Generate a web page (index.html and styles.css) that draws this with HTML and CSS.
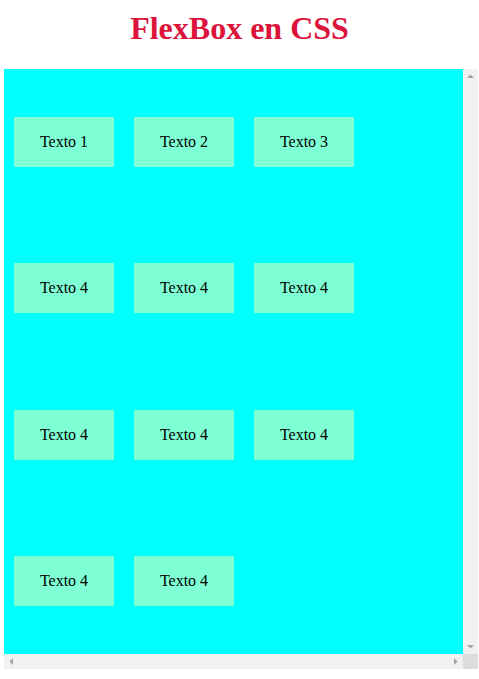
FILE: index.html
```html
<!DOCTYPE html>
<html lang="es">
<head>
<meta charset="utf-8">
<title>FlexBox en CSS</title>
<link rel="stylesheet" href="styles.css">
</head>
<body>
<h1 class="title">FlexBox en CSS</h1>
<div class="frame">
  <div class="container">
    <div class="item">Texto 1</div>
    <div class="item">Texto 2</div>
    <div class="item">Texto 3</div>
    <div class="item">Texto 4</div>
    <div class="item">Texto 4</div>
    <div class="item">Texto 4</div>
    <div class="item">Texto 4</div>
    <div class="item">Texto 4</div>
    <div class="item">Texto 4</div>
    <div class="item">Texto 4</div>
    <div class="item">Texto 4</div>
  </div>
  <div class="vbar">
    <svg class="btn" width="15" height="15" viewBox="0 0 15 15"><polygon points="4,9 11,9 7.5,5.5" fill="#a3a3a3"/></svg>
    <svg class="btn" width="15" height="15" viewBox="0 0 15 15"><polygon points="4,6 11,6 7.5,9.5" fill="#a3a3a3"/></svg>
  </div>
  <div class="hbar">
    <svg class="btn" width="15" height="15" viewBox="0 0 15 15"><polygon points="9,4 9,11 5.5,7.5" fill="#a3a3a3"/></svg>
    <svg class="btn" width="15" height="15" viewBox="0 0 15 15"><polygon points="6,4 6,11 9.5,7.5" fill="#a3a3a3"/></svg>
  </div>
  <div class="corner"></div>
</div>
</body>
</html>
```
FILE: styles.css
```css
html, body {
  margin: 0;
  padding: 0;
  background: #ffffff;
  font-family: "Liberation Serif", "Times New Roman", serif;
}
.title {
  margin: 0 0 22px;
  padding-top: 10px;
  font-size: 32px;
  line-height: 37px;
  font-weight: bold;
  text-align: center;
  color: crimson;
}
.frame {
  margin-left: 4px;
  width: 474px;
  height: 600px;
  display: grid;
  grid-template-columns: 459px 15px;
  grid-template-rows: 585px 15px;
}
.container {
  background: cyan;
  display: flex;
  flex-wrap: wrap;
  align-content: space-around;
}
.item {
  box-sizing: border-box;
  width: 100px;
  height: 50px;
  margin: 10px;
  background: aquamarine;
  color: #000;
  font-size: 16px;
  display: flex;
  align-items: center;
  justify-content: center;
}
.vbar {
  background: #f1f1f1;
  display: flex;
  flex-direction: column;
  justify-content: space-between;
}
.hbar {
  background: #f1f1f1;
  display: flex;
  justify-content: space-between;
}
.btn {
  display: block;
}
.corner {
  background: #dcdcdc;
}
```
